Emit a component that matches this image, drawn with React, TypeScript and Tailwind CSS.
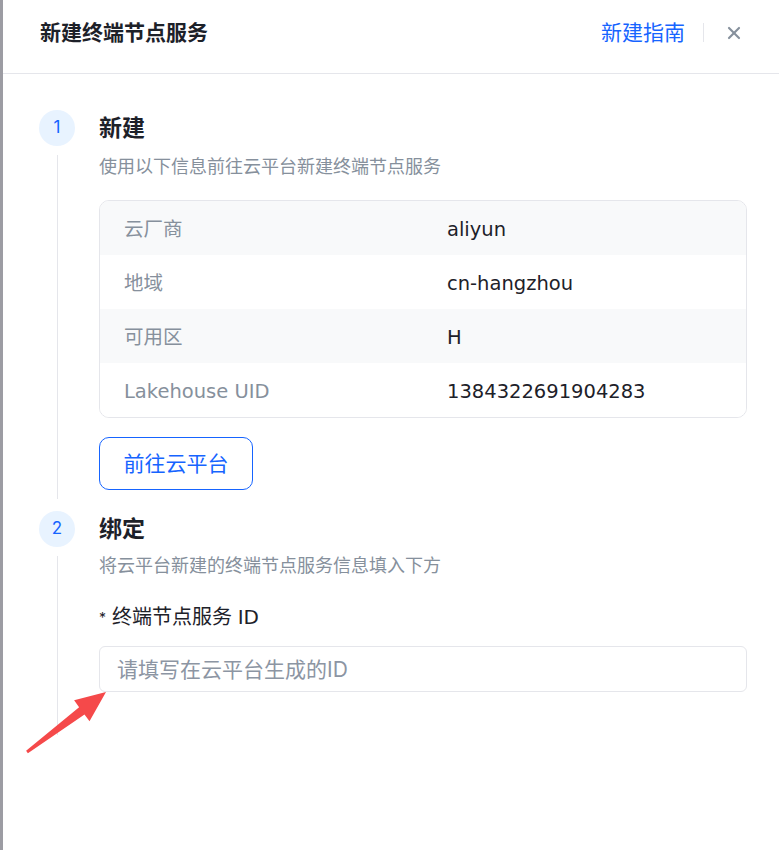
import { X } from 'lucide-react'

const ROWS: { label: string; value: string }[] = [
  { label: '云厂商',        value: 'aliyun' },
  { label: '地域',          value: 'cn-hangzhou' },
  { label: '可用区',        value: 'H' },
  { label: 'Lakehouse UID', value: '1384322691904283' },
]

const FONT = "font-['Inter','Noto_Sans_CJK_SC',sans-serif]"
const LATIN = "font-['DejaVu_Sans','Noto_Sans_CJK_SC',sans-serif]"

function StepMark({ n, last }: { n: number; last?: boolean }) {
  return (
    <div className="w-9 shrink-0 flex flex-col items-center">
      <div className="w-9 h-9 rounded-full bg-[#e8f3ff] text-[#1664ff] text-[17px] flex items-center justify-center">
        {n}
      </div>
      <div className={`w-px flex-1 bg-[#e5e6eb] mt-[9px] ${last ? 'mb-[12px]' : 'mb-[4px]'}`} />
    </div>
  )
}

export default function App() {
  return (
    <div className={`relative flex w-[779px] h-[850px] bg-white overflow-hidden ${FONT}`}>
      <div className="w-[3px] shrink-0 bg-[#9c9ca3]" />

      <div className="flex-1 flex flex-col">
        {/* Header */}
        <div className="h-[74px] shrink-0 flex items-center justify-between pl-[37px] pr-[35px] border-b border-[#e5e6eb]">
          <span className="text-[21px] font-bold text-[#1d2129] -mt-2">新建终端节点服务</span>
          <div className="flex items-center -mt-2">
            <span className="text-[21px] text-[#1664ff]">新建指南</span>
            <div className="w-px h-[19px] bg-[#e5e6eb] ml-[18px] mr-[20px]" />
            <X size={20} strokeWidth={2.6} className="text-[#86909c]" />
          </div>
        </div>

        {/* Body */}
        <div className="pt-[36px] pl-[36px] pr-[32px] flex flex-col gap-[8px]">
          {/* Step 1 */}
          <div className="flex gap-[24px]">
            <StepMark n={1} />
            <div className="flex-1 pb-[13px]">
              <div className="h-9 flex items-center text-[23px] font-bold text-[#1d2129]">新建</div>
              <div className="mt-[9px] leading-[24px] text-[18px] text-[#86909c]">使用以下信息前往云平台新建终端节点服务</div>
              <div className="mt-[21px] border border-[#e5e6eb] rounded-[10px] overflow-hidden">
                {ROWS.map((r, i) => (
                  <div key={r.label} className={`grid grid-cols-2 h-[54px] pt-[3px] items-center ${i % 2 === 0 ? 'bg-[#f8f9fa]' : 'bg-white'}`}>
                    <span className={`px-6 text-[19.5px] text-[#86909c] ${LATIN}`}>{r.label}</span>
                    <span className={`px-6 text-[19.5px] text-[#1d2129] ${LATIN}`}>{r.value}</span>
                  </div>
                ))}
              </div>
              <button className="mt-[19px] h-[53px] w-[154px] rounded-[10px] border border-[#1664ff] text-[21px] text-[#1664ff] bg-white">
                前往云平台
              </button>
            </div>
          </div>

          {/* Step 2 */}
          <div className="flex gap-[24px]">
            <StepMark n={2} last />
            <div className="flex-1 pb-[55px]">
              <div className="h-9 flex items-center text-[23px] font-bold text-[#1d2129]">绑定</div>
              <div className="mt-[7px] leading-[24px] text-[18px] text-[#86909c]">将云平台新建的终端节点服务信息填入下方</div>
              <div className="mt-[26px] leading-[24px] flex items-center text-[#1d2129]">
                <span className="text-[14px] mr-[6px] mt-[2px]">*</span>
                <span className="text-[20px]">终端节点服务 <span className={LATIN}>ID</span></span>
              </div>
              <input
                placeholder="请填写在云平台生成的ID"
                className="mt-[16px] w-full h-[46px] rounded-md border border-[#e5e6eb] px-[17px] text-[21px] outline-none placeholder:text-[#8c95a3]"
              />
            </div>
          </div>
        </div>
      </div>

      {/* annotation arrow */}
      <svg className="absolute inset-0 pointer-events-none" width="779" height="850" viewBox="0 0 779 850">
        <polygon
          points="106,692 89.5,721.3 84.5,714.4 27.9,753.2 26.1,750.8 79.1,707.2 74.1,700.3"
          fill="#f5494a"
        />
      </svg>
    </div>
  )
}
